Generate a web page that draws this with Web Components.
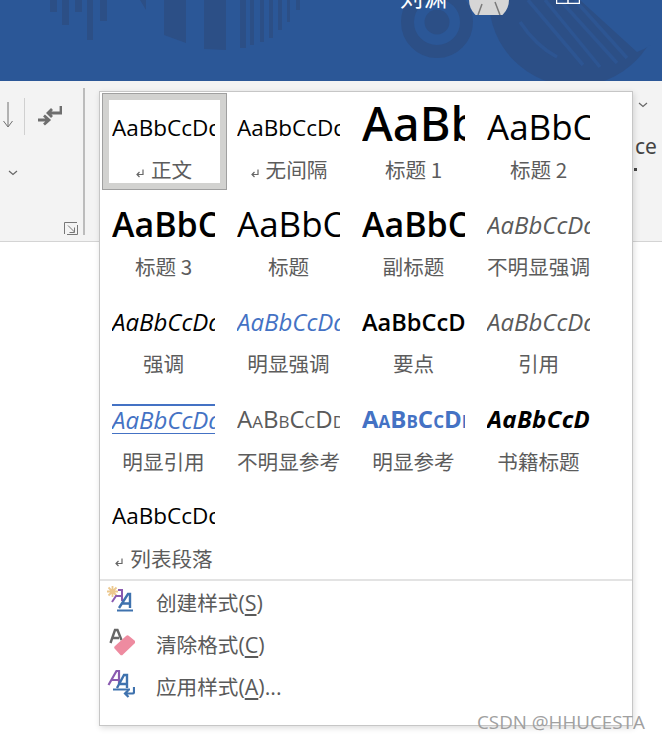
<!DOCTYPE html>
<html lang="zh">
<head>
<meta charset="utf-8">
<style>
  html, body { margin: 0; height: 100%; background: #fff; overflow: hidden; }
  body {
    position: relative;
    width: 662px;
    height: 740px;
    font-family: "Noto Sans", "Noto Sans CJK SC", sans-serif;
  }
</style>
</head>
<body>
<app-header></app-header>
<ribbon-bar></ribbon-bar>

<style-menu>
  <style-card slot="cards" label="正文" variant="normal" mark selected></style-card>
  <style-card slot="cards" label="无间隔" variant="normal" mark></style-card>
  <style-card slot="cards" label="标题 1" variant="h1"></style-card>
  <style-card slot="cards" label="标题 2" variant="h2"></style-card>
  <style-card slot="cards" label="标题 3" variant="h3"></style-card>
  <style-card slot="cards" label="标题" variant="h2"></style-card>
  <style-card slot="cards" label="副标题" variant="h3"></style-card>
  <style-card slot="cards" label="不明显强调" variant="subtle"></style-card>
  <style-card slot="cards" label="强调" variant="em"></style-card>
  <style-card slot="cards" label="明显强调" variant="em-blue"></style-card>
  <style-card slot="cards" label="要点" variant="strong"></style-card>
  <style-card slot="cards" label="引用" variant="subtle"></style-card>
  <style-card slot="cards" label="明显引用" variant="quote"></style-card>
  <style-card slot="cards" label="不明显参考" variant="ref"></style-card>
  <style-card slot="cards" label="明显参考" variant="ref-blue"></style-card>
  <style-card slot="cards" label="书籍标题" variant="book"></style-card>
  <style-card slot="cards" label="列表段落" variant="normal" mark></style-card>

  <menu-row slot="rows" icon="create" key="S">创建样式</menu-row>
  <menu-row slot="rows" icon="clear" key="C">清除格式</menu-row>
  <menu-row slot="rows" icon="apply" key="A" more>应用样式</menu-row>
</style-menu>

<water-mark>CSDN @HHUCESTA</water-mark>

<script>
class AppHeader extends HTMLElement {
  constructor () {
    super();
    this.attachShadow({ mode: 'open' });
  }

  connectedCallback () {
    const bars = [
      [50, 7, 12], [62, 7, 25], [75, 7, 12], [87, 6, 40], [100, 7, 21],
      [240, 6, 48], [250, 4, 45], [260, 4, 42], [269, 4, 38], [278, 4, 30], [287, 3, 22], [296, 4, 10]
    ].map(([x, w, h]) => `<rect x="${x}" y="0" width="${w}" height="${h}"/>`).join('');

    this.shadowRoot.innerHTML = /* html */ `
    <style>
      :host {
        display: flex;
        height: 81px;
        background: #2b5797;
        overflow: hidden;
        position: relative;
        color: #fff;
      }
      .art { position: absolute; left: 0; top: 0; }
      .who {
        position: relative;
        display: flex;
        align-items: flex-start;
        padding-left: 400px;
      }
      .name { font-size: 23px; line-height: 30px; margin-top: -18px; letter-spacing: 1px; }
      .face { display: block; margin-left: 21px; margin-top: 0; }
      .box { display: block; margin-left: 47px; }
    </style>
    <svg class="art" width="662" height="81" viewBox="0 0 662 81">
      <g fill="#2c4f86">
        ${bars}
        <path d="M140 0h6v10zM164 0h22v43l-22-8zM204 0h22v50l-22-1z"/>
        <circle cx="575" cy="0" r="86"/>
      </g>
      <path d="M580 0 637 52Q652 47 662 33V0z" fill="#2b5797"/>
      <g fill="none" stroke="#2d5592" stroke-width="3.500">
        <path d="M520 22Q536 46 557 57"/>
        <path d="M528 0 583 65M545 0 600 67M560 0 617 63M575 0 627 58"/>
      </g>
      <circle cx="437" cy="22" r="29.500" fill="none" stroke="#2c4f86" stroke-width="13"/>
      <circle cx="437" cy="22" r="12.500" fill="#2c4f86"/>
    </svg>
    <div class="who">
      <span class="name">刘渊</span>
      <svg class="face" width="40" height="15" viewBox="0 0 40 15">
        <path d="M0 0h40A20 20 0 0 1 0 0z" fill="#d6d6d6"/>
        <path d="M9 15 13 4M31 15 26 2" stroke="#7a7a7a" stroke-width="1.500" fill="none"/>
      </svg>
      <svg class="box" width="24" height="4" viewBox="0 0 24 4">
        <path d="M0.500 0V3.500H23.500V0M12 0V3" stroke="#fff" stroke-width="1.500" fill="none"/>
      </svg>
    </div>`;
  }
}

class RibbonBar extends HTMLElement {
  constructor () {
    super();
    this.attachShadow({ mode: 'open' });
  }

  connectedCallback () {
    this.shadowRoot.innerHTML = /* html */ `
    <style>
      :host {
        display: flex;
        height: 160px;
        background: #f3f3f3;
        border-bottom: 1px solid #d4d4d4;
        box-sizing: content-box;
      }
      .group {
        width: 83px;
        height: 147px;
        margin-top: 7px;
        border-right: 2px solid #bcbcbc;
        box-sizing: content-box;
        display: flex;
        flex-direction: column;
      }
      .icons { display: flex; align-items: center; height: 38px; margin-top: 9px; }
      .arrow { display: block; margin-left: 2px; }
      .rule { width: 1px; height: 37px; background: #d0d0d0; margin-left: 10px; }
      .enter { display: block; margin-left: 13px; }
      .chev { display: block; margin-left: 8px; margin-top: 35px; }
      .launch { display: block; margin-left: 64px; margin-top: 46px; }
      .rest {
        margin-left: auto;
        width: 29px;
        display: flex;
        flex-direction: column;
        color: #444;
        font-size: 21px;
        line-height: 28px;
      }
      .rest svg { display: block; margin: 21px 0 0 5px; }
      .rest span { margin: 24px 0 0 2px; }
      .rest i { width: 3px; height: 3px; background: #444; display: block; margin: 8px 0 0 1px; }
    </style>
    <div class="group">
      <div class="icons">
        <svg class="arrow" width="12" height="32" viewBox="0 0 12 32">
          <path d="M6 2V26M1.500 21 6 27 10.500 21" stroke="#707070" fill="none"/>
        </svg>
        <div class="rule"></div>
        <svg class="enter" width="24" height="22" viewBox="0 0 24 22">
          <path d="M23 1V8H11M14 4 10 8 14 12" stroke="#6e6e6e" stroke-width="2.800" fill="none"/>
          <path d="M0 15H10M6 10.500 11 15 6 19.500" stroke="#6e6e6e" stroke-width="2.800" fill="none"/>
        </svg>
      </div>
      <svg class="chev" width="10" height="6" viewBox="0 0 10 6">
        <path d="M1 1 5 4.500 9 1" stroke="#666" stroke-width="1.200" fill="none"/>
      </svg>
      <svg class="launch" width="14" height="13" viewBox="0 0 14 13">
        <path d="M0.500 12V0.500H13M4 3.500 10.500 10M10.500 5.500V10.500H5.500M13.500 3V12.500H3" stroke="#777" fill="none"/>
      </svg>
    </div>
    <div class="rest">
      <svg width="10" height="6" viewBox="0 0 10 6">
        <path d="M1 1 5 4.500 9 1" stroke="#666" stroke-width="1.200" fill="none"/>
      </svg>
      <span>ce</span>
      <i></i>
    </div>`;
  }
}

class StyleCard extends HTMLElement {
  constructor () {
    super();
    this.attachShadow({ mode: 'open' });
  }

  static get styles () {
    return /* css */ `
      :host {
        display: flex;
        flex-direction: column;
        box-sizing: border-box;
        width: 125px;
        height: 97.2px;
        border: 1px solid transparent;
        background-clip: padding-box;
        color: #000;
      }
      :host([selected]) { border-color: #a0a0a0; }
      .inner {
        flex: 1;
        border: 6px solid transparent;
        display: flex;
        flex-direction: column;
        min-height: 0;
      }
      :host([selected]) .inner { border-color: #d2d2d0; }
      .sample {
        height: 55px;
        width: 103px;
        margin-left: 3px;
        overflow: hidden;
        white-space: nowrap;
        display: flex;
        align-items: center;
        font-family: "Open Sans", "Noto Sans", sans-serif;
        font-size: 22.5px;
      }
      .sample span { display: block; line-height: 34px; }
      .label {
        height: 28px;
        line-height: 28px;
        text-align: center;
        font-family: "Noto Sans CJK SC", sans-serif;
        font-size: 20.6px;
        color: #5c5c5c;
        white-space: nowrap;
        margin-right: 2px;
      }
      .label svg { margin-right: 5px; vertical-align: -1px; }

      .h1 span { font-size: 47px; line-height: 50px; font-weight: 500; margin-top: -10px; font-family: "Noto Sans", sans-serif; }
      .h2 span { font-size: 35px; line-height: 44px; margin-top: -2px; }
      .h3 span { font-size: 34px; line-height: 44px; font-weight: 600; margin-top: -2px; }
      .subtle span { font-size: 24px; font-style: italic; color: #5a5a5a; }
      .em span { font-size: 24px; font-style: italic; }
      .em-blue span { font-size: 24px; font-style: italic; color: #4472c4; }
      .strong span { font-weight: 600; font-size: 23.6px; }
      .quote span {
        font-size: 24px;
        font-style: italic;
        color: #4472c4;
        line-height: 27px;
        width: 103px;
        overflow: hidden;
        border-top: 2px solid #4472c4;
        border-bottom: 1px solid #4472c4;
      }
      .ref span { font-size: 24px; font-variant: small-caps; color: #5a5a5a; }
      .ref-blue span { font-size: 24px; font-variant: small-caps; font-weight: 700; color: #4472c4; }
      .book span { font-style: italic; font-weight: 700; font-size: 24px; letter-spacing: .3px; }
    `;
  }

  connectedCallback () {
    const variant = this.getAttribute('variant');
    const mark = this.hasAttribute('mark')
      ? `<svg width="11" height="11" viewBox="0 0 11 11"><path d="M8 1.500V6.500H2.500M4.500 4 2 6.500 4.500 9" stroke="#666" stroke-width="1.200" fill="none"/></svg>`
      : '';
    this.shadowRoot.innerHTML = /* html */ `
    <style>${StyleCard.styles}</style>
    <div class="inner">
      <div class="sample ${variant}"><span>AaBbCcDd</span></div>
      <div class="label">${mark}${this.getAttribute('label')}</div>
    </div>`;
  }
}

class StyleMenu extends HTMLElement {
  constructor () {
    super();
    this.attachShadow({ mode: 'open' });
  }

  connectedCallback () {
    this.shadowRoot.innerHTML = /* html */ `
    <style>
      :host {
        display: flex;
        flex-direction: column;
        position: absolute;
        left: 99px;
        top: 91px;
        width: 534px;
        height: 635px;
        box-sizing: border-box;
        background: #fff;
        border: 1px solid #c6c6c6;
        box-shadow: 1px 2px 6px rgba(0, 0, 0, .14);
      }
      .cards {
        display: grid;
        grid-template-columns: repeat(4, 125px);
        grid-auto-rows: 97.2px;
        padding: 1px 0 0 2px;
        height: 486px;
      }
      .rows {
        padding-top: 3px;
        border-top: 2px solid #e3e3e3;
      }
    </style>
    <div class="cards"><slot name="cards"></slot></div>
    <div class="rows"><slot name="rows"></slot></div>`;
  }
}

const menuIcons = {
  create: `
    <g stroke="#ecc88e" stroke-width="1.800"><path d="M5.500 0V11M0 5.500H11M1.500 1.500 9.500 9.500M9.500 1.500 1.500 9.500"/></g>
    <path d="M11 4H15V15M15 10H9L5 16" stroke="#8a5bb0" stroke-width="2" fill="none"/>
    <path d="M12 22 21 8H23V22M15.500 17.500H23" stroke="#3f72ae" stroke-width="2.400" fill="none"/>
    <path d="M10 24.500H26" stroke="#3f72ae" stroke-width="2"/>`,
  clear: `
    <path d="M3.500 15 8 2H10.500L14.500 12M6 10H12" stroke="#666" stroke-width="2.400" fill="none"/>
    <path d="M8 18 19 8a2 2 0 0 1 3 0l5.500 4.500a2 2 0 0 1 0 3L16 26.500a2 2 0 0 1-3 0L8 21a2 2 0 0 1 0-3z" fill="#ee8ba0"/>`,
  apply: `
    <path d="M1.500 15 9.500 1H12V14M5 10H12" stroke="#8a5bb0" stroke-width="2.200" fill="none"/>
    <path d="M10 18 17 5H20V18M13 14H20" stroke="#3f72ae" stroke-width="2.400" fill="none"/>
    <path d="M6 19.500H23" stroke="#3f72ae" stroke-width="2"/>
    <path d="M27 17V22a1.500 1.500 0 0 1-1.500 1.500H18M21.500 20 18 23.500 21.500 27" stroke="#3f72ae" stroke-width="2.200" fill="none"/>`
};

class MenuRow extends HTMLElement {
  constructor () {
    super();
    this.attachShadow({ mode: 'open' });
  }

  connectedCallback () {
    const more = this.hasAttribute('more') ? '...' : '';
    this.shadowRoot.innerHTML = /* html */ `
    <style>
      :host {
        display: flex;
        align-items: center;
        height: 42px;
        color: #5a5a5a;
        font-family: "Noto Sans CJK SC", sans-serif;
        font-size: 20.6px;
        margin-top: -3px;
        margin-bottom: 3px;
      }
      svg { display: block; margin: -3px 0 0 7px; }
      .text { margin-left: 21px; white-space: nowrap; }
      .keys { font-family: "Open Sans", sans-serif; font-size: 21.5px; }
      u { text-underline-offset: 3px; }
    </style>
    <svg width="28" height="30" viewBox="0 0 28 30">${menuIcons[this.getAttribute('icon')]}</svg>
    <div class="text"><slot></slot><span class="keys">(<u>${this.getAttribute('key')}</u>)${more}</span></div>`;
  }
}

class WaterMark extends HTMLElement {
  constructor () {
    super();
    this.attachShadow({ mode: 'open' });
  }

  connectedCallback () {
    this.shadowRoot.innerHTML = /* html */ `
    <style>
      :host {
        position: absolute;
        left: 477px;
        top: 710px;
        font-family: "Open Sans", sans-serif;
        font-size: 18.800px;
        line-height: 24px;
        color: #a0a0a0;
        white-space: nowrap;
      }
    </style>
    <slot></slot>`;
  }
}

customElements.define('app-header', AppHeader);
customElements.define('ribbon-bar', RibbonBar);
customElements.define('style-card', StyleCard);
customElements.define('style-menu', StyleMenu);
customElements.define('menu-row', MenuRow);
customElements.define('water-mark', WaterMark);
</script>
</body>
</html>
